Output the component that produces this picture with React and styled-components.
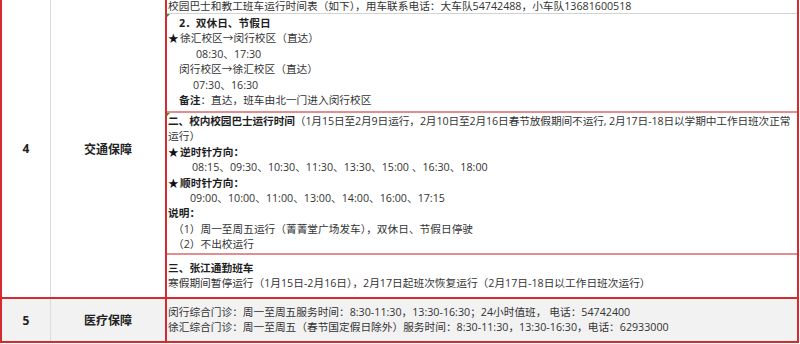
import React from 'react';
import styled, { createGlobalStyle } from 'styled-components';

const GlobalStyle = createGlobalStyle`
  * { box-sizing: border-box; }
  html, body { margin: 0; padding: 0; background: #fff; }
  body { font-family: "Open Sans", "Noto Sans CJK SC", sans-serif; }
`;

const RED = '#d42a30';
const PINK = '#e38d8f';

const Page = styled.div`
  width: 800px;
  height: 344px;
  overflow: hidden;
  background: #fff;
`;

const Table = styled.div`
  width: 799px;
  border-left: 2px solid ${RED};
  border-right: 2px solid ${RED};
  border-bottom: 2px solid ${RED};
`;

const Row = styled.div`
  display: flex;
  height: ${p => p.$h}px;
  background: ${p => (p.$shade ? '#f2f2f2' : '#fff')};
  border-bottom: ${p => (p.$last ? 'none' : `2px solid ${RED}`)};
`;

const IndexCell = styled.div`
  width: 49px;
  flex: none;
  border-right: 1px solid #dcdcdc;
  display: flex;
  align-items: center;
  justify-content: center;
  font-size: 12px;
  font-weight: 700;
  color: #222;
`;

const NameCell = styled.div`
  width: 116px;
  flex: none;
  border-right: 2px solid ${RED};
  display: flex;
  align-items: center;
  justify-content: center;
  font-size: 12px;
  font-weight: 700;
  color: #222;
`;

const Detail = styled.div`
  flex: 1;
  min-width: 0;
  display: flex;
  flex-direction: column;
  font-size: 10.7px;
  color: #333;
  justify-content: ${p => (p.$center ? 'center' : 'flex-start')};
  padding-left: 1px;
`;

const Sub = styled.div`
  position: relative;
  height: ${p => p.$h}px;
  flex: none;
  display: flex;
  flex-direction: column;
  justify-content: ${p => p.$align || 'flex-start'};
  padding: ${p => p.$pad || 0}px 0 0 1px;
  border-bottom: ${p => p.$edge || 'none'};
  margin-left: -1px;

  &::before {
    content: '';
    display: ${p => (p.$mark ? 'block' : 'none')};
    position: absolute;
    top: 0;
    left: 0;
    border-top: 3px solid #1f9a2e;
    border-right: 3px solid transparent;
  }
`;

const Line = styled.div`
  line-height: ${p => p.$lh || 15.4}px;
  white-space: nowrap;
  letter-spacing: ${p => (p.$tight ? '-0.12px' : 'normal')};
  padding-left: ${p => p.$indent || 0}px;
  font-weight: ${p => (p.$bold ? 700 : 400)};
  color: ${p => (p.$bold ? '#1e1e1e' : 'inherit')};
`;

const B = styled.b`
  font-weight: 700;
  color: #1e1e1e;
`;

const Star = styled.span`
  display: inline-block;
  width: 12px;
  color: #111;
`;

const App = () => {
  return (
    <Page>
      <GlobalStyle />
      <Table>
        <Row $h={299}>
          <IndexCell>4</IndexCell>
          <NameCell>交通保障</NameCell>
          <Detail>
            <Sub $h={14} $edge="1px solid #d2d2d2">
              <Line $lh={12.5}>校园巴士和教工班车运行时间表（如下），用车联系电话：大车队54742488，小车队13681600518</Line>
            </Sub>
            <Sub $h={99} $pad={2} $mark $edge={`2px solid ${PINK}`}>
              <Line $indent={11} $bold>2．双休日、节假日</Line>
              <Line><Star>★</Star>徐汇校区→闵行校区（直达）</Line>
              <Line $indent={28}>08:30、17:30</Line>
              <Line $indent={11}>闵行校区→徐汇校区（直达）</Line>
              <Line $indent={25}>07:30、16:30</Line>
              <Line $indent={11}><B>备注</B>：直达，班车由北一门进入闵行校区</Line>
            </Sub>
            <Sub $h={142} $pad={1} $mark $edge={`2px solid ${PINK}`}>
              <Line $tight><B>二、校内校园巴士运行时间</B>（1月15日至2月9日运行，2月10日至2月16日春节放假期间不运行, 2月17日-18日以学期中工作日班次正常</Line>
              <Line>运行）</Line>
              <Line $bold><Star>★</Star>逆时针方向：</Line>
              <Line $indent={24}>08:15、09:30、10:30、11:30、13:30、15:00 、16:30、18:00</Line>
              <Line $bold><Star>★</Star>顺时针方向：</Line>
              <Line $indent={22}>09:00、10:00、11:00、13:00、14:00、16:00、17:15</Line>
              <Line $bold>说明：</Line>
              <Line $indent={5}>（1）周一至周五运行（菁菁堂广场发车），双休日、节假日停驶</Line>
              <Line $indent={5}>（2）不出校运行</Line>
            </Sub>
            <Sub $h={42} $align="center">
              <Line $bold>三、张江通勤班车</Line>
              <Line>寒假期间暂停运行（1月15日-2月16日），2月17日起班次恢复运行（2月17日-18日以工作日班次运行）</Line>
            </Sub>
          </Detail>
        </Row>
        <Row $h={42} $shade $last>
          <IndexCell>5</IndexCell>
          <NameCell>医疗保障</NameCell>
          <Detail $center>
            <Line>闵行综合门诊：周一至周五服务时间：8:30-11:30，13:30-16:30；24小时值班， 电话：54742400</Line>
            <Line>徐汇综合门诊：周一至周五（春节国定假日除外）服务时间：8:30-11:30，13:30-16:30，电话：62933000</Line>
          </Detail>
        </Row>
      </Table>
    </Page>
  );
};

export default App;
